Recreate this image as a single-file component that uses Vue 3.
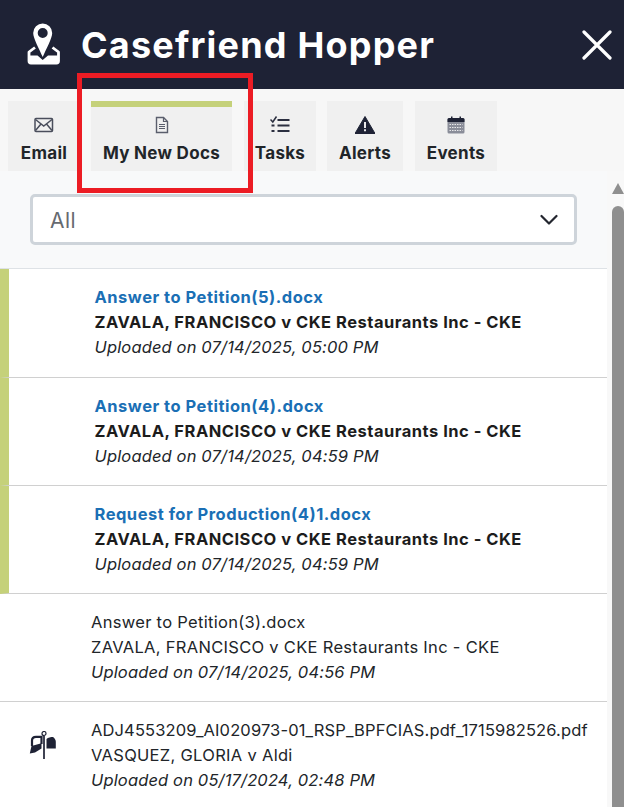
<script setup>
const tabs = [
  { label: 'Email', icon: 'mail' },
  { label: 'My New Docs', icon: 'doc', active: true },
  { label: 'Tasks', icon: 'tasks' },
  { label: 'Alerts', icon: 'alert' },
  { label: 'Events', icon: 'cal' },
]
const docs = [
  { name: 'Answer to Petition(5).docx', matter: 'ZAVALA, FRANCISCO v CKE Restaurants Inc - CKE', date: 'Uploaded on 07/14/2025, 05:00 PM', unread: true },
  { name: 'Answer to Petition(4).docx', matter: 'ZAVALA, FRANCISCO v CKE Restaurants Inc - CKE', date: 'Uploaded on 07/14/2025, 04:59 PM', unread: true },
  { name: 'Request for Production(4)1.docx', matter: 'ZAVALA, FRANCISCO v CKE Restaurants Inc - CKE', date: 'Uploaded on 07/14/2025, 04:59 PM', unread: true },
  { name: 'Answer to Petition(3).docx', matter: 'ZAVALA, FRANCISCO v CKE Restaurants Inc - CKE', date: 'Uploaded on 07/14/2025, 04:56 PM' },
  { name: 'ADJ4553209_AI020973-01_RSP_BPFCIAS.pdf_1715982526.pdf', matter: 'VASQUEZ, GLORIA v Aldi', date: 'Uploaded on 05/17/2024, 02:48 PM', mail: true },
]
</script>

<template>
  <div class="page">
    <header class="header">
      <svg class="logo" viewBox="0 0 34 46" width="34" height="46">
        <path fill="#fff" fill-rule="evenodd" d="M15.700 3.500a9.500 9.500 0 0 0-9.500 9.500c0 5 6 16 9.500 24c3.500-8 9.500-19 9.500-24a9.500 9.500 0 0 0-9.500-9.500zm0 4.500a5 5 0 1 1 0 10a5 5 0 0 1 0-10z"/>
        <path fill="none" stroke="#fff" stroke-width="2.800" stroke-linejoin="round" d="M8 27.500L2 32V41a2 2 0 0 0 2 2H29.500a2 2 0 0 0 2-2V32L25.500 27.500"/>
        <path fill="#fff" d="M2 35.500H10.500L15.700 40L21 35.500H31.500V43H2z"/>
      </svg>
      <h1 class="title">Casefriend Hopper</h1>
      <svg class="close" viewBox="0 0 30 30" width="30" height="30">
        <path d="M2 2L28 28M28 2L2 28" stroke="#fff" stroke-width="3.200" stroke-linecap="round" fill="none"/>
      </svg>
    </header>

    <nav class="tabs">
      <div v-for="t in tabs" :key="t.label" class="tab" :class="{ active: t.active, ['tab-' + t.icon]: true }">
        <svg class="tab-icon" viewBox="0 0 20 20" width="20" height="20">
          <g v-if="t.icon === 'mail'" fill="none" stroke="#4a4e5c" stroke-width="1.500">
            <rect x="1" y="3.500" width="17.500" height="13" rx="1"/>
            <path d="M1.500 4.500L9.750 11L18 4.500M1.500 15.500L7 9M18 15.500L12.500 9"/>
          </g>
          <g v-else-if="t.icon === 'doc'" fill="none" stroke="#5a5e6c" stroke-width="1.400">
            <path d="M4.500 2.500h7l4 4v11h-11z"/>
            <path d="M11.500 2.500v4h4M7 9.500h6M7 11.500h6M7 13.500h6" stroke-width="1.200"/>
          </g>
          <g v-else-if="t.icon === 'tasks'" fill="none" stroke="#2b2f40" stroke-width="2">
            <path d="M7.500 5h12M7.500 10.500h12M7.500 16h12"/>
            <path d="M0.500 4.500L2.800 7L6.500 1.500" stroke-width="1.500"/>
            <path d="M1.500 10.500h3M1.500 16h3" stroke-width="2.200"/>
          </g>
          <g v-else-if="t.icon === 'alert'">
            <path fill="#1e2235" d="M10 1.500L20 18.500H0z" stroke="#1e2235" stroke-linejoin="round"/>
            <path fill="#e8e8ea" d="M9 7h2v6H9zM9 14.300h2v2H9z"/>
          </g>
          <g v-else>
            <rect x="1.500" y="3" width="17" height="15.500" rx="1.500" fill="#8a8d99"/>
            <path fill="#1e2235" d="M1.500 4.500a1.500 1.500 0 0 1 1.500-1.500H17a1.500 1.500 0 0 1 1.500 1.500V7H1.500z"/>
            <path fill="#1e2235" d="M5 1.500h1.500v3H5zM13.500 1.500H15v3h-1.500z"/>
            <path stroke="#e8e8ea" stroke-width="1.200" stroke-dasharray="1.500 1" d="M3.500 9.500h13M3.500 12.500h13M3.500 15.500h13"/>
          </g>
        </svg>
        <span class="tab-label">{{ t.label }}</span>
      </div>
    </nav>

    <div class="main">
      <div class="content">
        <div class="filter">
          <div class="select">
            <span class="select-value">All</span>
            <svg viewBox="0 0 18 12" width="18" height="12">
              <path d="M1.500 2L9 9.500L16.500 2" stroke="#23262f" stroke-width="2.200" fill="none" stroke-linecap="round" stroke-linejoin="round"/>
            </svg>
          </div>
        </div>
        <ul class="list">
          <li v-for="d in docs" :key="d.name + d.date" class="row" :class="{ unread: d.unread }">
            <div class="slot">
              <svg v-if="d.mail" viewBox="0 0 27 28" width="27" height="28">
                <path fill="none" stroke="#1e2235" stroke-width="2.200" d="M3 15V9.500C3 7 5 5.800 7 5.800H12.500V13"/>
                <path fill="#1e2235" d="M0.800 22.500L2.500 15L12.500 12.300V17.500L6 21.500z"/>
                <path fill="#1e2235" d="M17.500 8C19 6.500 22 6 24 6C25.800 7 26.800 9 26.800 11V17.500H17.500z"/>
                <path stroke="#1e2235" stroke-width="1.700" d="M15 5V28"/>
                <circle cx="15" cy="2.500" r="2" fill="#fff" stroke="#1e2235" stroke-width="1.200"/>
              </svg>
            </div>
            <div class="text" :class="{ long: d.mail }">
              <div class="name">{{ d.name }}</div>
              <div class="matter">{{ d.matter }}</div>
              <div class="date">{{ d.date }}</div>
            </div>
          </li>
        </ul>
      </div>
      <div class="scrollbar">
        <div class="arrow"></div>
        <div class="thumb"></div>
      </div>
    </div>

    <div class="highlight"></div>
  </div>
</template>

<style>
html, body { margin: 0; background: #fff; overflow: hidden; }
</style>

<style scoped>
.page {
  position: relative;
  width: 624px;
  height: 807px;
  overflow: hidden;
  display: flex;
  flex-direction: column;
  font-family: Inter, "Open Sans", "Liberation Sans", sans-serif;
  color: #212529;
}
.header {
  height: 89px;
  flex: none;
  background: #1e2235;
  display: flex;
  align-items: center;
  padding: 0 12px 0 27px;
  box-sizing: border-box;
}
.logo { flex: none; margin-right: 20px; margin-top: -3px; }
.title {
  margin: 0;
  flex: 1;
  color: #fff;
  font-size: 36px;
  font-weight: 700;
  letter-spacing: 1.200px;
  line-height: 1;
  white-space: nowrap;
}
.close { flex: none; margin-left: auto; }
.tabs {
  flex: none;
  height: 82px;
  background: #f7f7f7;
  display: flex;
  padding: 12px 0 0 8px;
  box-sizing: border-box;
}
.tab {
  height: 70px;
  background: #f0f0f0;
  display: flex;
  flex-direction: column;
  align-items: center;
  box-sizing: border-box;
  padding-top: 14px;
}
.tab-mail { width: 69px; margin-right: 14px; padding-left: 3px; }
.tab-doc { width: 141px; margin-right: 12px; }
.tab-tasks { width: 72px; margin-right: 11px; }
.tab-alert { width: 76px; margin-right: 12px; }
.tab-cal { width: 82px; }
.tab.active { border-top: 6px solid #c5d17a; padding-top: 8px; }
.tab-icon { display: block; flex: none; }
.tab-label {
  margin-top: 8px;
  font-size: 17px;
  font-weight: 650;
  letter-spacing: 0.300px;
  line-height: 20px;
  white-space: nowrap;
  color: #212529;
}
.main { flex: 1; display: flex; min-height: 0; }
.content { flex: 1; min-width: 0; background: #f8f9fa; }
.filter { height: 97px; box-sizing: border-box; padding: 23px 30px 0 30px; }
.select {
  height: 51px;
  box-sizing: border-box;
  background: #fff;
  border: 3px solid #ced4da;
  border-radius: 5px;
  display: flex;
  align-items: center;
  justify-content: space-between;
  padding: 0 16px 0 17px;
  font-size: 21px;
  color: #666a70;
}
.select-value { padding-top: 2px; letter-spacing: 0.500px; }
.list { list-style: none; margin: 0; padding: 0; background: #fff; border-top: 1px solid #dee2e6; }
.row {
  height: 108px;
  box-sizing: border-box;
  border-bottom: 1px solid #d0d0d0;
  display: flex;
  align-items: flex-start;
}
.row:first-child { height: 109px; }
.row.unread { border-left: 9px solid #c5d17a; }
.slot { width: 91px; flex: none; display: flex; justify-content: center; align-items: center; height: 86px; box-sizing: border-box; padding-right: 7px; }
.row.unread .slot { width: 85.500px; }
.text { padding-top: 16px; min-width: 0; font-size: 16.500px; line-height: 25px; white-space: nowrap; color: #212529; }
.name, .matter { letter-spacing: 0.300px; }
.long .name { letter-spacing: 0.130px; }
.row.unread .name { color: #1a6fb5; font-weight: 700; letter-spacing: 0.500px; }
.row.unread .matter { font-weight: 700; color: #1c1c1c; letter-spacing: 0.500px; }
.date { font-style: italic; letter-spacing: 0.150px; }
.scrollbar {
  flex: none;
  width: 17px;
  background: #f8f8f8;
  display: flex;
  flex-direction: column;
  align-items: flex-end;
}
.arrow {
  margin-top: 12px;
  width: 0;
  height: 0;
  border-left: 6px solid transparent;
  border-right: 6px solid transparent;
  border-bottom: 11px solid #8f8f8f;
}
.thumb {
  margin-top: 12px;
  width: 12px;
  flex: 1;
  background: #8f8f8f;
  border-radius: 6px 6px 0 0;
}
.highlight {
  position: absolute;
  left: 77px;
  top: 73px;
  width: 176px;
  height: 120px;
  box-sizing: border-box;
  border: 5px solid #ec1c24;
  pointer-events: none;
}
</style>
